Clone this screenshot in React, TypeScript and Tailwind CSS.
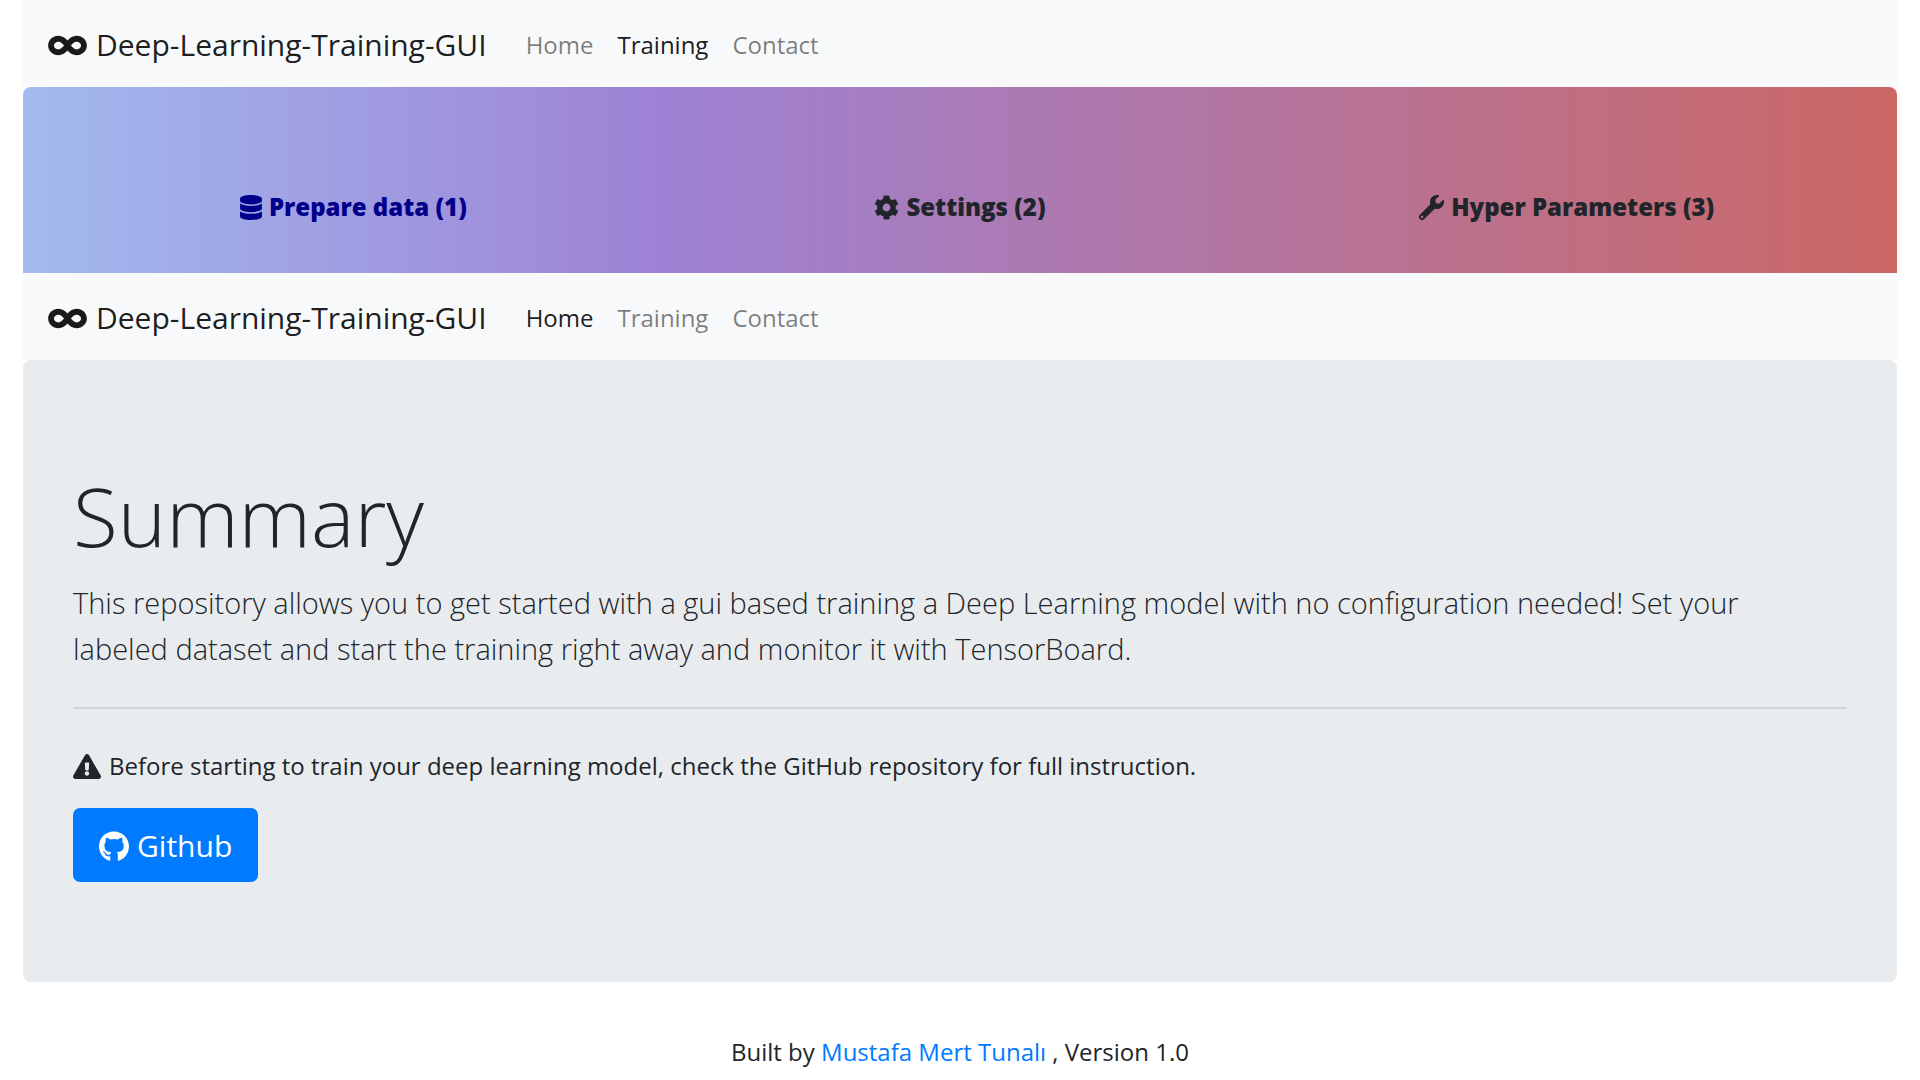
import { FaCog, FaDatabase, FaExclamationTriangle, FaGithub, FaInfinity, FaWrench } from "react-icons/fa";

const links = ["Home", "Training", "Contact"];

function Navbar({ active }: { active: string }) {
  return (
    <nav className="flex min-h-[87px] items-center bg-[#f8f9fa] px-[25px] pt-[15px] pb-3">
      <a href="#" className="mr-[27px] flex items-center gap-[9px] text-[30px] leading-[46px] text-black/90">
        <FaInfinity className="h-[31px] w-[39px]" />
        <span>Deep-Learning-Training-GUI</span>
      </a>
      <ul className="flex text-[24px] leading-[38px]">
        {links.map((link) => (
          <li key={link}>
            <a href="#" className={link === active ? "block px-3 text-black/90" : "block px-3 text-black/50"}>
              {link}
            </a>
          </li>
        ))}
      </ul>
    </nav>
  );
}

const steps = [
  { label: "Prepare data (1)", Icon: FaDatabase, color: "text-[#00008b]", size: "h-[25px] w-[22px]" },
  { label: "Settings (2)", Icon: FaCog, color: "text-[#212529]", size: "h-[25px] w-[25px]" },
  { label: "Hyper Parameters (3)", Icon: FaWrench, color: "text-[#212529]", size: "h-[25px] w-[25px]" },
];

export default function App() {
  return (
    <div className="bg-white px-[23px] font-['Open_Sans',sans-serif] text-[24px] leading-[38px] text-[#212529]">
      <Navbar active="Training" />
      <section className="rounded-t-[8px] bg-[linear-gradient(to_right,#a2baef,#9e82d5_34%,#cb6764)] px-[27px] pt-[101px] pb-[47px]">
        <ul className="grid grid-cols-3">
          {steps.map(({ label, Icon, color, size }) => (
            <li key={label} className="flex justify-center">
              <a href="#" className={`flex items-center gap-[7px] font-extrabold ${color}`}>
                <Icon className={size} />
                <span>{label}</span>
              </a>
            </li>
          ))}
        </ul>
      </section>
      <Navbar active="Home" />
      <main className="rounded-[8px] bg-[#e9ecef] px-[50px] pt-[102px] pb-[100px]">
        <h1 className="mb-3 text-[82px] leading-[106px] font-light">Summary</h1>
        <p className="pr-[60px] text-[29px] leading-[46px] font-light">
          This repository allows you to get started with a gui based training a Deep Learning model with no
          configuration needed! Set your labeled dataset and start the training right away and monitor it with
          TensorBoard.
        </p>
        <hr className="mt-[35px] mb-[38px] border-t-2 border-black/10" />
        <p className="mb-[23px] flex items-center gap-2">
          <FaExclamationTriangle className="h-[25px] w-[28px]" />
          <span>Before starting to train your deep learning model, check the GitHub repository for full instruction.</span>
        </p>
        <a
          href="#"
          className="inline-flex items-center gap-2 rounded-[7px] bg-[#007bff] px-[26px] pt-[15px] pb-[13px] text-[30px] leading-[46px] text-white"
        >
          <FaGithub className="h-[31px] w-[30px]" />
          <span>Github</span>
        </a>
      </main>
      <footer className="py-[51px] text-center">
        Built by{" "}
        <a href="#" className="text-[#007bff]">
          Mustafa Mert Tunalı
        </a>{" "}
        , Version 1.0
      </footer>
    </div>
  );
}
